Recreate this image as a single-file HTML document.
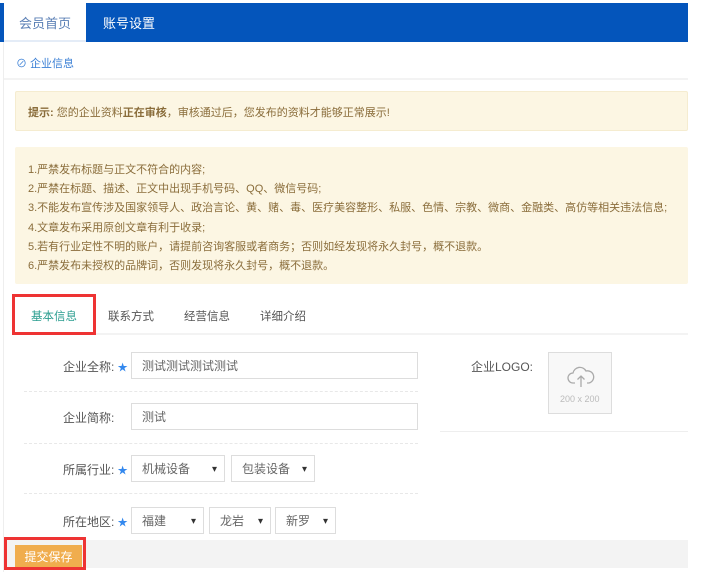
<!DOCTYPE html>
<html><head><meta charset="utf-8"><style>
*{margin:0;padding:0;box-sizing:border-box}
body{width:718px;height:571px;background:#fff;font-family:"Liberation Sans","Noto Sans CJK SC",sans-serif;font-size:12px;color:#555;position:relative;overflow:hidden}
.a{position:absolute;white-space:nowrap}
.nav{left:0;top:3px;width:688px;height:39px;background:#0455bb}
.inp{position:absolute;border:1px solid #ddd;background:#fff;height:27px;font-size:12px;color:#666;padding-left:10px;line-height:27px}
.sel:after{content:"▾";position:absolute;right:7px;top:0;font-size:10px;color:#333}
.hr{position:absolute;height:0;border-top:1px dashed #e8e8e8}
.lab{position:absolute;font-size:12px;color:#555}
.star{color:#3388ee;font-size:10px}
</style></head><body>
<div class="a nav"></div>
<div class="a" style="left:4px;top:3px;width:82px;height:39px;background:#fff;border-bottom:2px solid #e4ecf7"></div>
<div class="a" style="left:19px;top:13px;font-size:13px;color:#5a7fb5">会员首页</div>
<div class="a" style="left:103px;top:13px;font-size:13px;color:#fff">账号设置</div>
<div class="a" style="left:0;top:42px;width:4px;height:530px;border-right:1px solid #eee"></div>
<div class="a" style="left:16px;top:55px;font-size:11px;color:#3a7fd5">⊘ 企业信息</div>
<div class="a" style="left:4px;top:78px;width:684px;height:2px;background:#f3f3f3"></div>
<div class="a" style="left:15px;top:91px;width:673px;height:40px;background:#fcf6e3;border:1px solid #f5ecd0;border-radius:2px"></div>
<div class="a" style="left:28px;top:104px;font-size:11px;color:#8a6d3b"><b>提示:</b> 您的企业资料<b>正在审核</b>，审核通过后，您发布的资料才能够正常展示!</div>
<div class="a" style="left:15px;top:147px;width:673px;height:137px;background:#fcf6e3;border-radius:2px"></div>
<div class="a" style="left:28px;top:161px;font-size:11px;line-height:19.2px;color:#8a6d3b">1.严禁发布标题与正文不符合的内容;<br>2.严禁在标题、描述、正文中出现手机号码、QQ、微信号码;<br>3.不能发布宣传涉及国家领导人、政治言论、黄、赌、毒、医疗美容整形、私服、色情、宗教、微商、金融类、高仿等相关违法信息;<br>4.文章发布采用原创文章有利于收录;<br>5.若有行业定性不明的账户，请提前咨询客服或者商务；否则如经发现将永久封号，概不退款。<br>6.严禁发布未授权的品牌词，否则发现将永久封号，概不退款。</div>
<div class="a" style="left:12px;top:294px;width:84px;height:41px;border:3px solid #ee3333"></div>
<div class="a" style="left:31px;top:308px;font-size:11.5px;color:#2a9d8f">基本信息</div>
<div class="a" style="left:108px;top:308px;font-size:11.5px;color:#555">联系方式</div>
<div class="a" style="left:184px;top:308px;font-size:11.5px;color:#555">经营信息</div>
<div class="a" style="left:260px;top:308px;font-size:11.5px;color:#555">详细介绍</div>
<div class="a" style="left:96px;top:333px;width:592px;height:2px;background:#f3f3f3"></div>

<div class="lab" style="left:63px;top:358px">企业全称: <span class="star">★</span></div>
<div class="inp" style="left:131px;top:352px;width:287px">测试测试测试测试</div>
<div class="hr" style="left:24px;top:391px;width:394px"></div>
<div class="lab" style="left:63px;top:409px">企业简称:</div>
<div class="inp" style="left:131px;top:403px;width:287px">测试</div>
<div class="hr" style="left:24px;top:443px;width:394px"></div>
<div class="lab" style="left:63px;top:461px">所属行业: <span class="star">★</span></div>
<div class="inp sel" style="left:131px;top:455px;width:94px">机械设备</div>
<div class="inp sel" style="left:231px;top:455px;width:84px">包装设备</div>
<div class="hr" style="left:24px;top:493px;width:394px"></div>
<div class="lab" style="left:63px;top:513px">所在地区: <span class="star">★</span></div>
<div class="inp sel" style="left:131px;top:507px;width:73px">福建</div>
<div class="inp sel" style="left:209px;top:507px;width:62px">龙岩</div>
<div class="inp sel" style="left:275px;top:507px;width:61px">新罗</div>

<div class="lab" style="left:471px;top:358px">企业LOGO:</div>
<div class="a" style="left:548px;top:352px;width:64px;height:62px;border:1px solid #ddd;background:#f8f8f8"></div>
<svg class="a" style="left:566px;top:365px" width="30" height="24" viewBox="0 0 30 24"><path d="M9 18H7a5 5 0 0 1 0-10 7 7 0 0 1 13-2 5 5 0 0 1 3 12h-2" fill="none" stroke="#aaa" stroke-width="1.3"/><path d="M15 22V11M11.5 14.5 15 11l3.5 3.5" fill="none" stroke="#aaa" stroke-width="1.3"/></svg>
<div class="a" style="left:560px;top:394px;font-size:9px;color:#bbb">200 x 200</div>
<div class="a" style="left:440px;top:431px;width:248px;height:1px;background:#eee"></div>

<div class="a" style="left:4px;top:540px;width:684px;height:28px;background:#f3f3f3"></div>
<div class="a" style="left:15px;top:545px;width:67px;height:24px;background:#f0ad4e;color:#fff;font-size:12px;text-align:center;line-height:24px">提交保存</div>
<div class="a" style="left:4px;top:537px;width:82px;height:33px;border:3px solid #ee3333"></div>
</body></html>
